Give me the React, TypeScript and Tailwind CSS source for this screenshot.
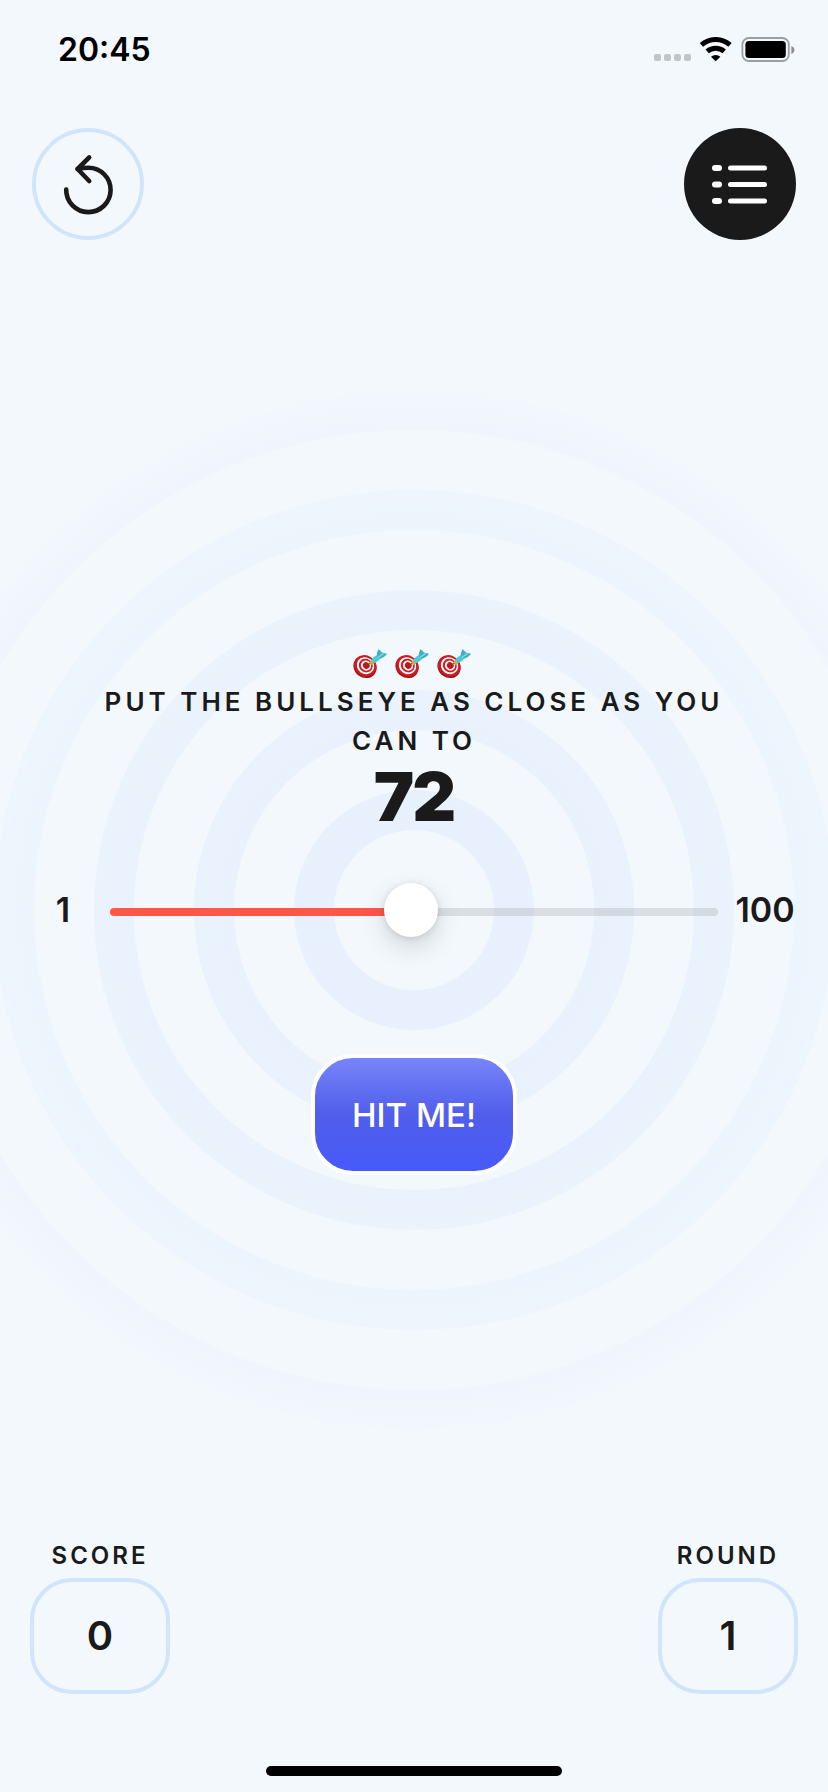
import { useState } from "react";

const MIN = 1;
const MAX = 100;
const THUMB = 54;

function Rings() {
  return (
    <div className="pointer-events-none absolute inset-0 flex items-center justify-center">
      <svg className="size-[1040px] shrink-0" viewBox="0 0 1040 1040" fill="none" aria-hidden="true">
        <defs>
          <radialGradient id="ring" gradientUnits="userSpaceOnUse" cx="520" cy="520" r="600">
            <stop offset="0.1667" stopColor="#c6d9fb" stopOpacity="0.25" />
            <stop offset="0.5" stopColor="#c6defb" stopOpacity="0.2" />
            <stop offset="0.7" stopColor="#c8e0fc" stopOpacity="0.13" />
            <stop offset="0.82" stopColor="#dfe2ff" stopOpacity="0.12" />
            <stop offset="0.88" stopColor="#dfe2ff" stopOpacity="0" />
          </radialGradient>
        </defs>
        {[100, 200, 300, 400, 500].map((r) => (
          <circle key={r} cx="520" cy="520" r={r} stroke="url(#ring)" strokeWidth="40" />
        ))}
      </svg>
    </div>
  );
}

function StatusBar() {
  return (
    <header className="flex h-24 items-center justify-between pt-1 pr-8 pl-[58px] text-black">
      <time className="text-[32px] leading-10 font-semibold">20:45</time>
      <svg className="h-[26px] w-[142px]" viewBox="0 0 142 26" aria-hidden="true">
        <g fill="#c2c6ca">
          <rect x="0" y="17" width="7" height="7" rx="2" />
          <rect x="10" y="17" width="7" height="7" rx="2" />
          <rect x="20" y="17" width="7" height="7" rx="2" />
          <rect x="30" y="17" width="7" height="7" rx="2" />
        </g>
        <g fill="none" stroke="#000" strokeWidth="5">
          <path d="M47.400 7.900a21.600 21.600 0 0 1 28.600 0" />
          <path d="M53.200 14.400a13 13 0 0 1 17 0" />
        </g>
        <path d="M61.700 24.200l-4.700-4.500a7.200 7.200 0 0 1 9.400 0z" />
        <rect x="88.400" y="1" width="46.4" height="23" rx="6.5" fill="none" stroke="#9a9ea3" strokeWidth="1.8" />
        <rect x="91.400" y="4" width="40.4" height="17" rx="3.5" />
        <path d="M137.400 9c4 1.200 4 6.800 0 8z" fill="#8b8e92" />
      </svg>
    </header>
  );
}

function Dart() {
  return (
    <svg className="h-[30px] w-[34px]" viewBox="0 0 34 30" aria-hidden="true">
      <ellipse cx="12" cy="18" rx="12" ry="10.6" transform="rotate(35 12 18)" fill="#8f1418" />
      <ellipse cx="12.3" cy="16.9" rx="11.7" ry="10.4" transform="rotate(35 12.3 16.9)" fill="#d01a20" />
      <ellipse cx="12.5" cy="16.7" rx="9" ry="8.2" transform="rotate(35 12.5 16.7)" fill="#fff" />
      <ellipse cx="12.8" cy="16.6" rx="7.2" ry="6.600" transform="rotate(35 12.8 16.6)" fill="#cf1b21" />
      <ellipse cx="13" cy="16.6" rx="5.3" ry="4.900" transform="rotate(35 13 16.6)" fill="#fff" />
      <ellipse cx="13.3" cy="16.6" rx="3.5" ry="3.200" transform="rotate(35 13.3 16.6)" fill="#c4161c" />
      <path d="M14 16.6l4-3.1" stroke="#7a3a12" strokeWidth="1" />
      <path d="M16.200 13.400l2.600 2.800 2-1.800-2.800-3z" fill="#e3a51c" />
      <path d="M17.600 11.200q3-3.800 7-5.400l3.400 3.200q-3 4-7.400 5.600z" fill="#4fc9d6" />
      <path d="M23.800 7.400q-.6-3.600 1.800-7.400L29 3.600l5 1.200q-3 4.400-7 4.600z" fill="#3fb2c0" />
      <path d="M24.800 8.400L30.600 4.600" stroke="#7fe3ec" strokeWidth="1.200" />
    </svg>
  );
}

function ScoreBox({ label, value }: { label: string; value: number }) {
  return (
    <div className="flex flex-col items-center gap-0.5">
      <dt className="text-[24px] leading-10 font-semibold tracking-[3px]">{label}</dt>
      <dd className="flex h-[116px] w-[140px] items-center justify-center rounded-[42px] border-4 border-[#d0e4fb] text-[40px] font-semibold">
        {value}
      </dd>
    </div>
  );
}

export default function App() {
  const [guess, setGuess] = useState(50);
  const ratio = (guess - MIN) / (MAX - MIN);
  const fill = `calc(${THUMB / 2}px + (100% - ${THUMB}px) * ${ratio})`;

  return (
    <div className="flex min-h-screen flex-col overflow-hidden bg-[#f3f8fd] font-['Inter',sans-serif] text-[#1a1a1a]">
      <StatusBar />
      <main className="relative flex flex-1 flex-col pt-8 pb-[30px]">
        <Rings />
        <div className="relative flex justify-between px-8">
          <button
            type="button"
            aria-label="Start over"
            onClick={() => setGuess(50)}
            className="flex size-28 items-center justify-center rounded-full border-4 border-[#d0e4fb]"
          >
            <svg
              className="size-16"
              viewBox="0 0 64 64"
              fill="none"
              stroke="#1a1a1a"
              strokeWidth="4.6"
              strokeLinecap="round"
              strokeLinejoin="round"
              aria-hidden="true"
            >
              <path d="M10.2 37.500A22.200 22.200 0 1 0 32.400 15.700q-4.500 0-10.800 1.300" />
              <path d="M33.200 5.400L21.600 17l11.600 12" />
            </svg>
          </button>
          <button
            type="button"
            aria-label="Leaderboard"
            className="flex size-28 items-center justify-center rounded-full bg-[#1a1a1a]"
          >
            <svg className="size-16" viewBox="0 0 64 64" fill="#fff" aria-hidden="true">
              <rect x="4" y="13" width="10" height="6" rx="3" />
              <rect x="20" y="13.5" width="39" height="5" rx="2.5" />
              <rect x="4" y="29.5" width="10" height="6" rx="3" />
              <rect x="20" y="30" width="39" height="5" rx="2.5" />
              <rect x="4" y="46" width="10" height="6" rx="3" />
              <rect x="20" y="46.5" width="39" height="5" rx="2.5" />
            </svg>
          </button>
        </div>

        <section className="relative flex flex-1 flex-col items-center justify-center pt-[42px]">
          <div role="img" aria-label="Three bullseyes" className="flex h-[38px] items-end gap-2 pr-1 pb-[3px]">
            <Dart />
            <Dart />
            <Dart />
          </div>
          <p className="max-w-[660px] text-center text-[26px] leading-[39px] font-semibold tracking-[4px]">
            PUT THE BULLSEYE AS CLOSE AS YOU CAN TO
          </p>
          <h1 className="text-[68px] leading-[72px] font-black tracking-[-2px]">72</h1>
          <div className="mt-[38px] flex h-20 w-full items-center gap-3 px-7 text-[34px] font-semibold">
            <span className="w-[70px] text-center">{MIN}</span>
            <input
              type="range"
              aria-label="Guess"
              min={MIN}
              max={MAX}
              value={guess}
              onChange={(e) => setGuess(Number(e.target.value))}
              style={{
                backgroundImage: `linear-gradient(to right, #ff564a ${fill}, rgba(120,120,128,0.2) ${fill})`,
              }}
              className="mt-1 h-2 min-w-0 flex-1 appearance-none rounded-full [&::-webkit-slider-runnable-track]:h-2 [&::-webkit-slider-thumb]:mt-[-25px] [&::-webkit-slider-thumb]:size-[54px] [&::-webkit-slider-thumb]:appearance-none [&::-webkit-slider-thumb]:rounded-full [&::-webkit-slider-thumb]:bg-white [&::-webkit-slider-thumb]:shadow-[0_10px_26px_rgba(0,0,0,0.14),0_1px_6px_rgba(0,0,0,0.12)]"
            />
            <span className="w-[70px] text-center">{MAX}</span>
          </div>
          <button
            type="button"
            className="mt-[104px] rounded-[42px] border-4 border-white bg-linear-to-b from-[#7b87fb] via-[#505eea] to-[#475afa] bg-origin-border px-[37px] pt-[37px] pb-[36px] text-[33px] leading-10 font-medium text-white"
          >
            HIT ME!
          </button>
        </section>

        <dl className="relative flex justify-between px-[30px]">
          <ScoreBox label="SCORE" value={0} />
          <ScoreBox label="ROUND" value={1} />
        </dl>
      </main>
      <footer className="flex h-[68px] items-end justify-center pb-4">
        <div className="h-[10px] w-[296px] rounded-full bg-black" />
      </footer>
    </div>
  );
}
